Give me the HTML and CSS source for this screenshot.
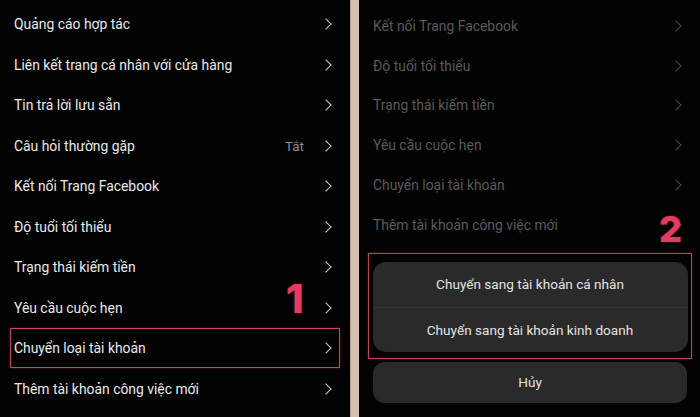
FILE: index.html
```html
<!DOCTYPE html>
<html lang="vi">
<head>
<meta charset="utf-8">
<link rel="stylesheet" href="styles.css">
</head>
<body>
<div class="screen">
  <section class="panel left">
    <ul class="list">
      <li class="row"><span class="label">Quảng cáo hợp tác</span><span class="chev"></span></li>
      <li class="row"><span class="label">Liên kết trang cá nhân với cửa hàng</span><span class="chev"></span></li>
      <li class="row"><span class="label">Tin trả lời lưu sẵn</span><span class="chev"></span></li>
      <li class="row"><span class="label">Câu hỏi thường gặp</span><span class="value">Tắt</span><span class="chev"></span></li>
      <li class="row"><span class="label">Kết nối Trang Facebook</span><span class="chev"></span></li>
      <li class="row"><span class="label">Độ tuổi tối thiểu</span><span class="chev"></span></li>
      <li class="row"><span class="label">Trạng thái kiếm tiền</span><span class="chev"></span></li>
      <li class="row"><span class="label">Yêu cầu cuộc hẹn</span><span class="chev"></span></li>
      <li class="row marked"><span class="label">Chuyển loại tài khoản</span><span class="chev"></span></li>
      <li class="row"><span class="label">Thêm tài khoản công việc mới</span><span class="chev"></span></li>
    </ul>
    <span class="step step-1">1</span>
  </section>
  <div class="divider"></div>
  <section class="panel right">
    <ul class="list dim">
      <li class="row"><span class="label">Kết nối Trang Facebook</span><span class="chev"></span></li>
      <li class="row"><span class="label">Độ tuổi tối thiểu</span><span class="chev"></span></li>
      <li class="row"><span class="label">Trạng thái kiếm tiền</span><span class="chev"></span></li>
      <li class="row"><span class="label">Yêu cầu cuộc hẹn</span><span class="chev"></span></li>
      <li class="row"><span class="label">Chuyển loại tài khoản</span><span class="chev"></span></li>
      <li class="row"><span class="label">Thêm tài khoản công việc mới</span><span class="chev"></span></li>
    </ul>
    <div class="sheet">
      <div class="marked-box">
        <div class="group">
          <div class="action">Chuyển sang tài khoản cá nhân</div>
          <div class="action">Chuyển sang tài khoản kinh doanh</div>
        </div>
      </div>
      <div class="cancel">Hủy</div>
    </div>
    <span class="step step-2">2</span>
  </section>
</div>
</body>
</html>
```
FILE: styles.css
```css
* { box-sizing: border-box; }
html, body { margin: 0; padding: 0; background: #000; }
body {
  width: 700px;
  height: 417px;
  overflow: hidden;
  font-family: "Roboto", "Liberation Sans", sans-serif;
}
.screen {
  display: flex;
  width: 700px;
  height: 417px;
}
.panel {
  position: relative;
  background: #030303;
  height: 100%;
}
.left { width: 350px; }
.divider {
  width: 9px;
  background: #d6bfad;
  border-left: 1px solid #b9a190;
}
.right { flex: 1; }

.list {
  list-style: none;
  margin: 0;
  padding: 3.75px 10px 0 10px;
}
.row {
  display: flex;
  align-items: center;
  height: 40.5px;
  padding: 0 8px 0 4px;
  color: #e9e9e9;
  font-size: 13.9px;
}
.label { flex: 1; white-space: nowrap; }
.value {
  color: #8c8c8c;
  font-size: 13.5px;
  margin-right: 18px;
}
.chev {
  width: 8px;
  height: 8px;
  border-right: 1.6px solid #c9c9c9;
  border-top: 1.6px solid #c9c9c9;
  transform: rotate(45deg);
  margin-right: 2px;
}
.row.marked {
  outline: 1.5px solid #c4465d;
  outline-offset: -1px;
  box-shadow: 0 0 3px rgba(220, 60, 90, 0.35);
}

.right .list {
  padding: 6px 17px 0 14px;
}
.dim .row {
  height: 39.8px;
  padding: 0 2px 0 0;
  color: #595959;
}
.dim .chev {
  border-color: #4a4a4a;
  margin-right: 1px;
}

.sheet {
  margin: 8px 8px 0 9px;
  display: flex;
  flex-direction: column;
  gap: 3px;
}
.marked-box {
  border: 1.5px solid #b8475a;
  box-shadow: 0 0 3px rgba(220, 60, 90, 0.35);
  padding: 8px 3.5px 6px 3.5px;
}
.group {
  background: #2a2a2a;
  border-radius: 13px;
  overflow: hidden;
}
.action {
  height: 45px;
  display: flex;
  align-items: center;
  justify-content: center;
  color: #e2e2e2;
  font-size: 13.6px;
}
.action + .action { border-top: 1px solid #353535; }
.cancel {
  margin: 0 5px;
  height: 41px;
  background: #2a2a2a;
  border-radius: 12px;
  display: flex;
  align-items: center;
  justify-content: center;
  color: #e2e2e2;
  font-size: 13.6px;
}

.step {
  position: absolute;
  color: #e63b61;
  font-family: "Inter", "Liberation Sans", sans-serif;
  font-weight: 800;
  line-height: 1;
  text-shadow: 0 0 3px rgba(230, 59, 97, 0.4);
}
.step-1 { left: 286px; top: 279px; font-size: 40px; }
.step-2 { left: 300px; top: 211px; font-size: 36px; }
```
